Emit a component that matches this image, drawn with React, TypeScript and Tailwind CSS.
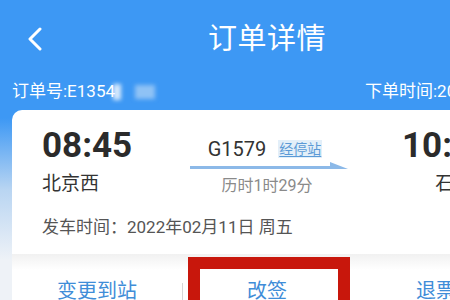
import React from "react";

const font = { fontFamily: "Roboto, 'Noto Sans CJK SC', sans-serif" };

function BackIcon() {
  return (
    <svg width="16" height="24" viewBox="0 0 16 24" fill="none">
      <path d="M13 2 L3 12 L13 22" stroke="white" strokeWidth="3" strokeLinecap="round" strokeLinejoin="round" />
    </svg>
  );
}

function RouteArrow() {
  return (
    <svg width="160" height="10" viewBox="0 0 160 10" className="block">
      <rect x="0" y="4" width="150" height="3" fill="#8cb9e8" />
      <path d="M140 0 L158 7 L140 7 Z" fill="#8cb9e8" />
    </svg>
  );
}

export default function App() {
  return (
    <div
      className="relative w-[450px] h-[300px] overflow-hidden bg-[linear-gradient(to_bottom,#3d98f4_0px,#3d98f4_118px,#b9d5f2_190px,#eef2f7_260px)] text-[#333]"
      style={font}
    >
      {/* header */}
      <div className="flex items-center h-[76px] pt-[2px]">
        <div className="pl-[27px] w-[208px] shrink-0">
          <BackIcon />
        </div>
        <h1 className="text-[29px] text-white leading-none tracking-[0.5px] whitespace-nowrap">订单详情</h1>
      </div>

      {/* order row */}
      <div className="flex items-center h-[32px] text-[17px] text-white whitespace-nowrap">
        <div className="w-[365px] shrink-0 pl-[12px] flex items-center">
          <span>订单号:E1354</span>
          <span className="ml-[-2px] w-[8px] h-[16px] bg-white/80 blur-[2px]" />
          <span className="ml-[14px] w-[20px] h-[14px] bg-[#8fc2f5] blur-[2px]" />
        </div>
        <span className="shrink-0">下单时间:2022-02-10</span>
      </div>

      {/* card */}
      <div className="ml-[12px] mt-[2px] w-[510px] rounded-[10px] bg-white overflow-hidden">
        <div className="flex pl-[30px] pt-[18px]">
          <div className="w-[150px] shrink-0">
            <div className="text-[35px] font-bold leading-none text-[#2b2b2b]">08:45</div>
            <div className="mt-[11px] text-[19px] leading-none text-[#333]">北京西</div>
          </div>
          <div className="w-[160px] shrink-0 pt-[11px] flex flex-col items-center">
            <div className="flex items-center pr-[14px]">
              <span className="text-[20px] leading-none text-[#333]">G1579</span>
              <span className="ml-[12px] px-[1px] text-[14px] leading-[18px] text-[#5b9ad6] bg-[#e3eff9] underline underline-offset-[2px]">经停站</span>
            </div>
            <div className="mt-[3px] self-start -ml-[2px]">
              <RouteArrow />
            </div>
            <div className="mt-[6px] pr-[10px] text-[16px] leading-none text-[#8a8a8a]">历时1时29分</div>
          </div>
          <div className="ml-[50px] shrink-0 flex flex-col items-end">
            <div className="text-[35px] font-bold leading-none text-[#2b2b2b]">10:14</div>
            <div className="mt-[11px] text-[19px] leading-none text-[#333]">石家庄</div>
          </div>
        </div>

        <div className="pl-[30px] mt-[25px] text-[17px] leading-none text-[#555]">
          发车时间：2022年02月11日 周五
        </div>

        {/* actions */}
        <div className="mt-[18px] h-[60px] flex items-start pt-[27px] bg-[linear-gradient(to_bottom,#f1f1f1_0px,#ffffff_16px)] text-[20px] leading-none text-[#3f8dd8]">
          <div className="w-[170px] shrink-0 text-center">变更到站</div>
          <div className="w-px shrink-0 h-[24px] bg-[#d6d6d6] mt-[2px]" />
          <div className="w-[168px] shrink-0 text-center">改签</div>
          <div className="w-[170px] shrink-0 text-center">退票</div>
        </div>
      </div>

      {/* red annotation box */}
      <div className="absolute left-[188px] top-[257px] w-[162px] h-[60px] border-[12px] border-[#c8170c]" />
    </div>
  );
}
